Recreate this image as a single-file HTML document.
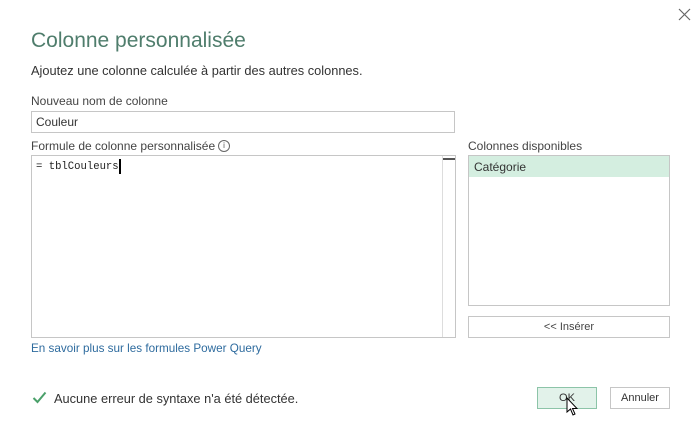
<!DOCTYPE html>
<html><head><meta charset="utf-8"><style>
*{margin:0;padding:0;box-sizing:border-box}
body{width:700px;height:439px;background:#fff;font-family:"Liberation Sans",sans-serif;color:#333;position:relative;overflow:hidden}
.a{position:absolute;white-space:nowrap}
.box{position:absolute;border:1px solid #c6c6c6;background:#fff}
</style></head><body>
<svg class="a" style="left:678px;top:8px" width="13" height="13"><path d="M1 1L12 12M12 1L1 12" stroke="#666" stroke-width="1.2"/></svg>
<div class="a" style="left:31px;top:29px;font-size:21px;color:#4f7d6c">Colonne personnalisée</div>
<div class="a" style="left:31px;top:63px;font-size:12.8px;color:#333">Ajoutez une colonne calculée à partir des autres colonnes.</div>
<div class="a" style="left:31px;top:94px;font-size:12px;color:#444">Nouveau nom de colonne</div>
<div class="box" style="left:31px;top:111px;width:424px;height:22px"></div>
<div class="a" style="left:36px;top:115px;font-size:12px;color:#333">Couleur</div>
<div class="a" style="left:31px;top:139px;font-size:12px;color:#444">Formule de colonne personnalisée</div>
<div class="a" style="left:218px;top:140px;width:12px;height:12px;border:1px solid #666;border-radius:50%;font-size:8px;text-align:center;line-height:10px;color:#555">i</div>
<div class="box" style="left:31px;top:155px;width:425px;height:183px"></div>
<div class="a" style="left:442px;top:156px;width:1px;height:181px;background:#ddd"></div>
<div class="a" style="left:443px;top:158px;width:12px;height:2px;background:#555"></div>
<div class="a" style="left:36px;top:161px;font-size:10.6px;font-family:'Liberation Mono',monospace;color:#222">= tblCouleurs</div>
<div class="a" style="left:119px;top:159px;width:2px;height:15px;background:#000"></div>
<div class="a" style="left:468px;top:139px;font-size:12px;color:#444">Colonnes disponibles</div>
<div class="box" style="left:468px;top:155px;width:202px;height:151px"></div>
<div class="a" style="left:469px;top:156px;width:200px;height:21px;background:#d4eee0"></div>
<div class="a" style="left:474px;top:160px;font-size:12px;color:#333">Catégorie</div>
<div class="box" style="left:468px;top:316px;width:202px;height:22px;text-align:center;font-size:11px;line-height:20px;color:#444">&lt;&lt; Insérer</div>
<div class="a" style="left:31px;top:342px;font-size:11.7px;color:#2e6b9e">En savoir plus sur les formules Power Query</div>
<svg class="a" style="left:32px;top:391px" width="15" height="13"><path d="M1.5 7L5.5 11L13.5 1.5" stroke="#4aa06a" stroke-width="2" fill="none"/></svg>
<div class="a" style="left:54px;top:391px;font-size:12.8px;color:#333">Aucune erreur de syntaxe n'a été détectée.</div>
<div class="box" style="left:537px;top:387px;width:60px;height:22px;background:#e2f2ea;border-color:#8cc4a8;text-align:center;font-size:11px;line-height:20px">OK</div>
<svg class="a" style="left:566px;top:397px" width="12" height="20"><path d="M1 1L1 15L4.5 12L7 18L9 17L6.5 11.5L11 11.5Z" fill="#fff" stroke="#000" stroke-width="1"/></svg>
<div class="box" style="left:610px;top:387px;width:60px;height:22px;text-align:center;font-size:11px;line-height:20px;color:#333">Annuler</div>
</body></html>
